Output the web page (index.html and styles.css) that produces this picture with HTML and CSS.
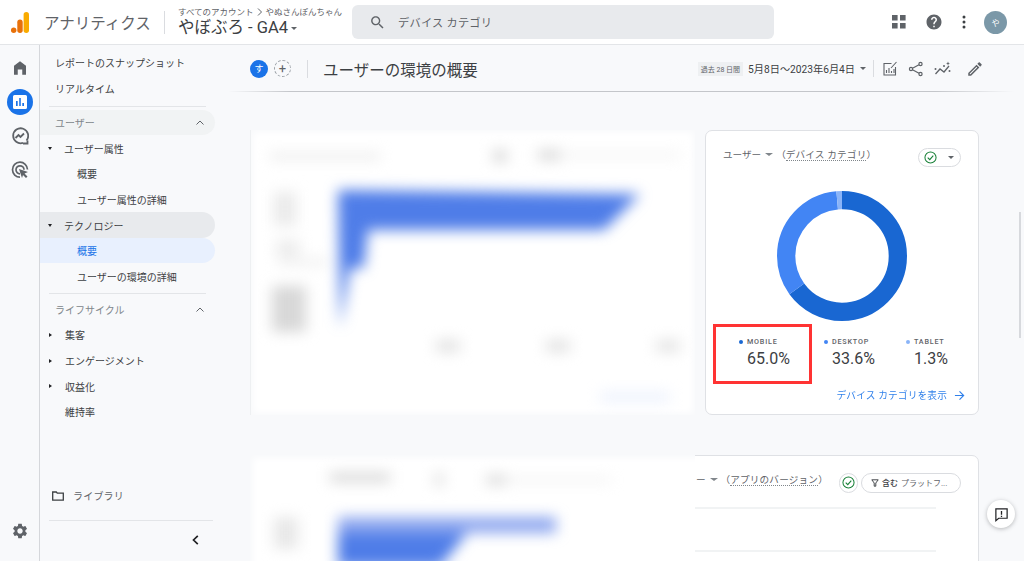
FILE: index.html
```html
<!DOCTYPE html>
<html lang="ja">
<head>
<meta charset="utf-8">
<title>アナリティクス</title>
<link rel="stylesheet" href="styles.css">
</head>
<body>
<div class="app">
  <header class="topbar">
    <svg class="logo" viewBox="0 0 18 21" width="18" height="21"><rect x="12.6" y="0" width="5.4" height="21" rx="2.7" fill="#f9ab00"/><rect x="6.300" y="7.500" width="5.400" height="13.500" rx="2.700" fill="#e8710a"/><circle cx="2.700" cy="18.300" r="2.700" fill="#e8710a"/></svg>
    <span class="product">アナリティクス</span>
    <span class="top-sep"></span>
    <div class="account">
      <div class="crumb">すべてのアカウント <svg class="crumb-arrow" viewBox="0 0 6 8" width="6" height="8"><path d="M1 .5 4.500 4 1 7.500" fill="none" stroke="#5f6368"/></svg> やぬさんぽんちゃん</div>
      <div class="property">やぼぶろ - GA4<i class="caret caret-prop"></i></div>
    </div>
    <div class="search">
      <svg viewBox="0 0 24 24" width="17" height="17"><path fill="#5f6368" d="M15.500 14h-.79l-.28-.27C15.410 12.590 16 11.110 16 9.500 16 5.910 13.090 3 9.500 3S3 5.910 3 9.500 5.910 16 9.500 16c1.610 0 3.090-.59 4.230-1.570l.27.28v.79l5 4.990L20.490 19l-4.990-5zm-6 0C7.010 14 5 11.990 5 9.500S7.010 5 9.500 5 14 7.010 14 9.500 11.990 14 9.500 14z"/></svg>
      <span>デバイス カテゴリ</span>
    </div>
    <div class="top-actions">
      <svg viewBox="0 0 14 14" width="14" height="14"><path fill="#5f6368" d="M0 0h5.600v5.600H0zM8 0h5.600v5.600H8zM0 8h5.600v5.600H0zM8 8h5.600v5.600H8z"/></svg>
      <svg viewBox="0 0 24 24" width="18" height="18"><path fill="#5f6368" d="M12 2C6.480 2 2 6.480 2 12s4.480 10 10 10 10-4.480 10-10S17.520 2 12 2zm1 17h-2v-2h2v2zm2.070-7.750l-.9.920C13.450 12.900 13 13.500 13 15h-2v-.5c0-1.100.45-2.100 1.170-2.830l1.240-1.260c.37-.36.59-.86.59-1.410 0-1.100-.9-2-2-2s-2 .9-2 2H8c0-2.210 1.790-4 4-4s4 1.790 4 4c0 .88-.36 1.680-.93 2.250z"/></svg>
      <svg viewBox="0 0 4 14" width="4" height="14"><g fill="#3c4043"><circle cx="2" cy="2" r="1.500"/><circle cx="2" cy="7" r="1.500"/><circle cx="2" cy="12" r="1.500"/></g></svg>
      <span class="avatar">や</span>
    </div>
  </header>

  <div class="body">
    <nav class="rail">
      <svg class="rail-home" viewBox="0 0 24 24" width="18" height="18"><path fill="#5f6368" d="M12 3 4 9v12h5v-7h6v7h5V9z"/></svg>
      <span class="rail-active"><svg viewBox="0 0 14 14" width="14" height="14"><path fill="#fff" fill-rule="evenodd" d="M1.500 0h11A1.500 1.500 0 0 1 14 1.500v11a1.500 1.500 0 0 1-1.500 1.500h-11A1.500 1.500 0 0 1 0 12.500v-11A1.500 1.500 0 0 1 1.500 0zM3 6v5h1.700V6zm3.200-3v8h1.600V3zm3.100 5v3H11V8z"/></svg></span>
      <svg class="rail-icon" viewBox="0 0 18 18" width="18" height="18"><g fill="none" stroke="#5f6368" stroke-width="1.800"><path d="M15.500 13.500A7.500 7.500 0 1 0 12 15.900"/><path d="M4.500 11 7.500 8l2 2 3.500-3.500"/><path d="M12 16.500h4.500v-3"/></g></svg>
      <svg class="rail-icon" viewBox="0 0 18 18" width="18" height="18"><g fill="none" stroke="#5f6368" stroke-width="1.700"><path d="M9 16.200A7.500 7.500 0 1 1 16.500 8.500"/><path d="M9 12.800A4 4 0 1 1 13 8.800"/></g><path fill="#5f6368" d="M8 8l9 3-3.500 1.500 3 3-1.500 1.500-3-3L11 17z"/></svg>
      <svg class="rail-gear" viewBox="0 0 24 24" width="18" height="18"><path fill="#5f6368" d="M19.140 12.940c.04-.3.06-.61.06-.94 0-.32-.02-.64-.07-.94l2.030-1.580c.18-.14.23-.41.12-.61l-1.920-3.320c-.12-.22-.37-.29-.59-.22l-2.390.96c-.5-.38-1.030-.7-1.620-.94l-.36-2.540c-.04-.24-.24-.41-.48-.41h-3.840c-.24 0-.43.17-.47.41l-.36 2.540c-.59.24-1.130.57-1.620.94l-2.390-.96c-.22-.08-.47 0-.59.22L2.740 8.870c-.12.21-.08.47.12.61l2.030 1.580c-.05.3-.09.63-.09.94s.02.64.07.94l-2.030 1.580c-.18.14-.23.41-.12.61l1.920 3.320c.12.22.37.29.59.22l2.390-.96c.5.38 1.030.7 1.620.94l.36 2.540c.05.24.24.41.48.41h3.840c.24 0 .44-.17.47-.41l.36-2.540c.59-.24 1.130-.56 1.620-.94l2.390.96c.22.08.47 0 .59-.22l1.920-3.320c.12-.22.07-.47-.12-.61l-2.010-1.580zM12 15.600c-1.980 0-3.600-1.620-3.600-3.600s1.620-3.600 3.600-3.600 3.600 1.620 3.600 3.600-1.620 3.600-3.600 3.600z"/></svg>
    </nav>

    <aside class="sidebar">
      <div class="row lv0">レポートのスナップショット</div>
      <div class="row lv0">リアルタイム</div>
      <hr class="nav-sep">
      <div class="row head pill-soft"><span>ユーザー</span><svg class="chev" viewBox="0 0 8 5" width="8" height="5"><path d="M.5 4.500 4 1l3.500 3.500" fill="none" stroke="#5f6368"/></svg></div>
      <div class="row lv1"><i class="caret caret-down"></i>ユーザー属性</div>
      <div class="row lv2">概要</div>
      <div class="row lv2">ユーザー属性の詳細</div>
      <div class="row lv1 pill-grey"><i class="caret caret-down"></i>テクノロジー</div>
      <div class="row lv2 pill-blue">概要</div>
      <div class="row lv2">ユーザーの環境の詳細</div>
      <hr class="nav-sep nav-sep-b">
      <div class="row head"><span>ライフサイクル</span><svg class="chev" viewBox="0 0 8 5" width="8" height="5"><path d="M.5 4.500 4 1l3.500 3.500" fill="none" stroke="#5f6368"/></svg></div>
      <div class="row lv1"><i class="caret caret-right"></i>集客</div>
      <div class="row lv1"><i class="caret caret-right"></i>エンゲージメント</div>
      <div class="row lv1"><i class="caret caret-right"></i>収益化</div>
      <div class="row lv1 no-caret">維持率</div>
      <div class="library">
        <svg viewBox="0 0 12 10" width="12" height="10"><path fill="none" stroke="#3c4043" stroke-width="1.300" d="M.7 1h3.600l1 1.200h6v7H.7z"/></svg>
        <span>ライブラリ</span>
      </div>
      <hr class="nav-sep nav-sep-wide">
      <div class="collapse"><svg viewBox="0 0 7 10" width="7" height="10"><path d="M5.800.8 1.500 5l4.300 4.200" fill="none" stroke="#202124" stroke-width="1.700"/></svg></div>
    </aside>

    <main class="main">
      <div class="titlebar">
        <span class="chip-s">す</span>
        <span class="chip-plus">+</span>
        <span class="title-sep"></span>
        <h1 class="title">ユーザーの環境の概要</h1>
        <div class="tools">
          <span class="period">過去 28 日間</span>
          <span class="dates">5月8日〜2023年6月4日</span>
          <i class="caret caret-date"></i>
          <span class="tools-sep"></span>
          <svg viewBox="0 0 16 16" width="16" height="16"><g fill="none" stroke="#5f6368" stroke-width="1.100"><path d="M9.500 2.500H2v11.500h11.500V6"/><path d="M4.500 12V9M7 12V7M9.500 12v-2M12 12V8"/><path d="m9 7 5.500-6"/></g></svg>
          <svg viewBox="0 0 16 16" width="16" height="16"><g fill="none" stroke="#5f6368" stroke-width="1.200"><circle cx="12.500" cy="3" r="1.600"/><circle cx="3" cy="8" r="1.600"/><circle cx="12.500" cy="13" r="1.600"/><path d="M11 3.800 4.500 7.200M4.500 8.800l6.500 3.400"/></g></svg>
          <svg viewBox="0 0 18 16" width="18" height="16"><path fill="none" stroke="#5f6368" stroke-width="1.300" d="M1.500 13 6 8l4 3 5-6"/><g fill="#5f6368"><circle cx="1.500" cy="8" r="1"/><circle cx="10" cy="5" r="1"/><circle cx="15.500" cy="10" r="1"/><path d="m14 .5.600 1.400L16 2.500l-1.400.6L14 4.500l-.6-1.400-1.400-.6 1.400-.6z"/></g></svg>
          <svg class="tool-edit" viewBox="0 0 24 24" width="18" height="18"><path fill="#5f6368" d="M3 17.250V21h3.750L17.810 9.940l-3.750-3.750L3 17.250zM5.920 19H5v-.92l9.060-9.060.92.92L5.920 19zM20.710 7.040c.39-.39.39-1.020 0-1.410l-2.340-2.340c-.2-.2-.45-.29-.71-.29s-.51.1-.7.29l-1.830 1.830 3.750 3.750 1.830-1.830z"/></svg>
        </div>
      </div>

      <section class="grid">
        <div class="blur-panel">
          <svg viewBox="0 0 445 285" width="445" height="285">
            <g class="blurred">
              <rect x="20" y="24" width="110" height="5" fill="#e4e4e4"/>
              <rect x="243" y="20" width="14" height="12" fill="#d8d8d8"/>
              <rect x="288" y="20" width="22" height="10" fill="#d8d8d8"/>
              <rect x="310" y="23" width="120" height="4" fill="#ececec"/>
              <rect x="24" y="62" width="22" height="34" fill="#eaeaea"/>
              <rect x="26" y="110" width="24" height="16" fill="#ececec"/>
              <rect x="28" y="129" width="50" height="6" fill="#ececec"/>
              <rect x="22" y="156" width="34" height="46" fill="#d8d8d8"/>
              <polygon points="88,60 390,64 354,100 118,100 114,138 100,138 90,198" fill="#4f7de8"/>
              <rect x="186" y="210" width="24" height="12" fill="#e2e2e2"/>
              <rect x="296" y="210" width="24" height="12" fill="#e2e2e2"/>
              <rect x="406" y="210" width="24" height="12" fill="#e4e4e4"/>
              <rect x="350" y="263" width="70" height="8" fill="#e9effd"/>
            </g>
          </svg>
        </div>
        <article class="card">
          <div class="card-head">
            <span class="metric">ユーザー<i class="caret caret-metric"></i></span>
            <span class="paren">（<span class="dotted">デバイス カテゴリ</span>）</span>
            <span class="check-chip">
              <svg viewBox="0 0 14 14" width="13" height="13"><circle cx="7" cy="7" r="6" fill="none" stroke="#188038" stroke-width="1.100"/><path d="M4 7.200 6.200 9.400 10 5" fill="none" stroke="#188038" stroke-width="1.200"/></svg>
              <i class="caret caret-chip"></i>
            </span>
          </div>
          <svg class="donut" viewBox="0 0 130 130" width="130" height="130">
            <g fill="none" stroke-width="18.300" transform="rotate(-90 65 65)">
              <circle cx="65" cy="65" r="55.850" stroke="#1967d2" pathLength="100" stroke-dasharray="65 35"/>
              <circle cx="65" cy="65" r="55.850" stroke="#4285f4" pathLength="100" stroke-dasharray="33.600 66.400" stroke-dashoffset="-65"/>
              <circle cx="65" cy="65" r="55.850" stroke="#8ab4f8" pathLength="100" stroke-dasharray="1.400 98.600" stroke-dashoffset="-98.600"/>
            </g>
          </svg>
          <div class="legend">
            <div class="leg"><div class="leg-name"><i class="dot dot-a"></i>MOBILE</div><div class="leg-val">65.0%</div></div>
            <div class="leg"><div class="leg-name"><i class="dot dot-b"></i>DESKTOP</div><div class="leg-val">33.6%</div></div>
            <div class="leg"><div class="leg-name"><i class="dot dot-c"></i>TABLET</div><div class="leg-val">1.3%</div></div>
          </div>
          <a class="card-link">デバイス カテゴリを表示<svg viewBox="0 0 12 12" width="11" height="11"><path d="M1 6h9.500M6 1.500 10.500 6 6 10.500" fill="none" stroke="#1a73e8" stroke-width="1.300"/></svg></a>
          <span class="redbox"></span>
        </article>

        <div class="blur-panel blur-panel-2">
          <svg viewBox="0 0 445 110" width="445" height="110">
            <g class="blurred">
              <rect x="80" y="18" width="60" height="9" fill="#d6d6d6"/>
              <rect x="184" y="18" width="10" height="13" fill="#e2e2e2"/>
              <rect x="236" y="20" width="20" height="10" fill="#dcdcdc"/>
              <rect x="256" y="23" width="105" height="4" fill="#ececec"/>
              <rect x="24" y="62" width="24" height="32" fill="#e8e8e8"/>
              <rect x="88" y="62" width="218" height="16" fill="#8fa8ef"/>
              <polygon points="88,78 217,78 190,112 88,112" fill="#4f7de8"/>
            </g>
          </svg>
        </div>
        <article class="card card-2">
          <div class="card-head">
            <span class="metric">ー<i class="caret caret-metric"></i></span>
            <span class="paren">（<span class="dotted">アプリのバージョン</span>）</span>
            <span class="check-round"><svg viewBox="0 0 14 14" width="13" height="13"><circle cx="7" cy="7" r="6" fill="none" stroke="#188038" stroke-width="1.100"/><path d="M4 7.200 6.200 9.400 10 5" fill="none" stroke="#188038" stroke-width="1.200"/></svg></span>
            <span class="filter-chip"><svg viewBox="0 0 10 10" width="8" height="8"><path d="M1 1h8L6 5v4H4V5z" fill="none" stroke="#3c4043" stroke-width="1.200"/></svg><b>含む</b> プラットフ...</span>
          </div>
          <div class="rule"></div>
          <div class="rule"></div>
        </article>
      </section>
    </main>
  </div>

  <span class="scroll-thumb"></span>
  <button class="feedback" aria-label="feedback"><svg viewBox="0 0 16 16" width="15" height="15"><path fill="none" stroke="#202124" stroke-width="1.300" d="M2 2h12v10H5l-3 2.500z"/><path stroke="#202124" stroke-width="1.400" d="M8 4.300v4M8 9.200v1.400"/></svg></button>
</div>
</body>
</html>
```
FILE: styles.css
```css
* { box-sizing: border-box; }
html, body { margin: 0; height: 100%; overflow: hidden; }
body { font-family: "Roboto", "Noto Sans CJK JP", sans-serif; color: #3c4043; background: #f8f9fb; }
.app { position: relative; width: 1024px; height: 561px; display: flex; flex-direction: column; overflow: hidden; }

.topbar { height: 45px; flex: none; background: #fff; border-bottom: 1px solid #e3e5e8; display: flex; align-items: center; padding-left: 11px; }
.product { font-size: 15.5px; color: #5f6368; margin-left: 15px; width: 111px; white-space: nowrap; }
.top-sep { width: 1px; height: 23px; background: #dadce0; margin: 0 13px 0 9px; }
.account { width: 174px; flex: none; }
.crumb { font-size: 8.5px; line-height: 11px; color: #5f6368; white-space: nowrap; display: flex; align-items: center; gap: 3px; }
.crumb-arrow { flex: none; }
.property { font-size: 16.5px; line-height: 20px; color: #3c4043; white-space: nowrap; display: flex; align-items: center; }
.search { width: 422px; height: 34px; background: #e8eaed; border-radius: 6px; display: flex; align-items: center; padding-left: 17px; gap: 12px; font-size: 11.2px; color: #5f6368; letter-spacing: .25px; }
.top-actions { display: flex; align-items: center; margin-left: 118px; gap: 19px; }
.avatar { width: 23px; height: 23px; border-radius: 50%; background: #7b98a8; color: #fff; font-size: 8px; display: flex; align-items: center; justify-content: center; margin-left: -1px; }

.caret { display: inline-block; width: 0; height: 0; flex: none; border-style: solid; border-color: #5f6368 transparent transparent; border-width: 3px 3px 0; }
.caret-prop { margin-left: 3px; margin-top: 2px; }
.caret-date { margin-left: 5px; }
.caret-metric { margin-left: 4px; border-width: 3.5px 4px 0; border-top-color: #80868b; }
.caret-chip { margin-left: 11px; }

.body { flex: 1; display: flex; min-height: 0; }
.rail { width: 40px; flex: none; border-right: 1px solid #d5d7db; display: flex; flex-direction: column; align-items: center; padding: 14px 0 0 1px; gap: 16px; }
.rail-active { width: 26px; height: 26px; border-radius: 50%; background: #1a73e8; display: flex; align-items: center; justify-content: center; margin: -4px 0; }
.rail-gear { margin-top: auto; margin-bottom: 21px; }

.sidebar { width: 188px; flex: none; display: flex; flex-direction: column; padding-top: 5.2px; font-size: 10px; color: #3c4043; }
.row { height: 25.6px; flex: none; display: flex; align-items: center; width: 175px; white-space: nowrap; }
.lv0 { padding-left: 15px; }
.lv1 { padding-left: 8px; }
.no-caret { padding-left: 25px; }
.lv2 { padding-left: 37px; }
.head { padding: 0 11px 0 15px; justify-content: space-between; color: #80868b; }
.pill-soft { background: #f1f3f4; border-radius: 0 13px 13px 0; }
.pill-grey { background: #e8eaed; border-radius: 0 13px 13px 0; }
.pill-blue { background: #e8f0fe; border-radius: 0 13px 13px 0; color: #1a73e8; }
.caret-down { border-width: 3px 2.5px 0; border-top-color: #202124; margin-right: 12px; }
.caret-right { border-width: 2.5px 0 2.5px 3px; border-color: transparent transparent transparent #202124; margin: 0 13px 0 1px; }
.nav-sep { border: 0; height: 1px; background: #e3e5e8; margin: 5px 0 2.5px 9px; width: 157px; flex: none; }
.nav-sep-b { margin-top: 4px; }
.nav-sep-wide { width: 164px; margin-top: 16px; margin-bottom: 0; }
.library { display: flex; align-items: center; margin-top: 63px; padding-left: 12px; gap: 9px; height: 16px; color: #5f6368; flex: none; }
.library span { letter-spacing: .2px; }
.collapse { display: flex; justify-content: flex-end; padding: 14px 29px 0 0; }

.main { flex: 1; min-width: 0; overflow: hidden; }
.titlebar { height: 47px; display: flex; align-items: center; padding: 0 40px 0 22px; position: relative; }
.titlebar::after { content: ""; position: absolute; left: 0; right: 10px; bottom: 0; height: 1px; background: linear-gradient(90deg, rgba(0,0,0,0), #c4c6ca 8%, #c4c6ca 90%, rgba(0,0,0,0)); }
.chip-s { width: 18px; height: 18px; border-radius: 50%; background: #1a73e8; color: #fff; font-size: 9px; display: flex; align-items: center; justify-content: center; }
.chip-plus { width: 17px; height: 17px; border-radius: 50%; border: 1px dashed #9aa0a6; margin-left: 6px; display: flex; align-items: center; justify-content: center; font-size: 13px; line-height: 1; color: #5f6368; }
.title-sep { width: 1px; height: 18px; background: #dadce0; margin: 0 15px 0 16px; }
.title { font-size: 15.5px; font-weight: 400; color: #3c4043; margin: 0; white-space: nowrap; }
.tools { margin-left: auto; display: flex; align-items: center; }
.period { background: #eef0f2; font-size: 7px; color: #5f6368; padding: 2px 3px; white-space: nowrap; margin-right: 5px; }
.dates { font-size: 10.2px; color: #3c4043; white-space: nowrap; }
.tools-sep { width: 1px; height: 17px; background: #dadce0; margin: 0 8px 0 7px; }
.tools svg { margin-right: 10px; }
.tools .tool-edit { margin: 0 0 0 4px; }

.grid { display: grid; grid-template-columns: 445px 274px; column-gap: 10px; row-gap: 40px; padding: 38px 0 0 22px; }
.blur-panel { height: 285px; background: #fff; position: relative; z-index: 1; box-shadow: inset 0 0 7px 2px #f8f9fb; border-left: 1px solid #eef0f2; }
.blur-panel svg { display: block; margin-left: -1px; }
.blurred { filter: blur(7px); }
.blur-panel-2 { height: 110px; box-shadow: inset 6px 6px 7px -3px #f8f9fb; border-left: 0; }
.blur-panel-2 svg { margin-left: 0; }

.card { background: #fff; border: 1px solid #dfe1e5; border-radius: 7px; height: 285px; padding: 0 17px; position: relative; display: flex; flex-direction: column; }
.card-head { display: flex; align-items: center; height: 19px; margin-top: 17px; font-size: 9.6px; color: #5f6368; white-space: nowrap; flex: none; }
.metric { display: inline-flex; align-items: center; margin-bottom: 7px; }
.paren { margin: 0 0 7px 3px; }
.dotted { border-bottom: 1px dotted #80868b; letter-spacing: .2px; }
.check-chip { margin-left: auto; width: 43px; height: 19px; border: 1px solid #dadce0; border-radius: 10px; display: flex; align-items: center; padding-left: 5px; }
.donut { display: block; margin: 24px 0 0 54px; flex: none; }
.legend { display: grid; grid-template-columns: 85px 82px 82px; margin: 16px 0 0 16px; }
.leg { display: flex; flex-direction: column; align-items: flex-start; }
.leg-name { font-size: 7.2px; letter-spacing: .8px; color: #5f6368; font-weight: 500; line-height: 10px; display: flex; align-items: center; gap: 4px; }
.leg-val { font-size: 16px; color: #3c4043; line-height: 24px; padding-left: 8px; }
.dot { width: 4px; height: 4px; border-radius: 50%; }
.dot-a { background: #1967d2; } .dot-b { background: #4285f4; } .dot-c { background: #8ab4f8; }
.card-link { margin-top: 17px; align-self: flex-end; margin-right: -4px; color: #1a73e8; font-size: 9.7px; display: flex; align-items: center; gap: 7px; letter-spacing: .15px; white-space: nowrap; opacity: .9; }
.redbox { position: absolute; left: 7px; top: 193px; width: 99px; height: 60px; border: 3.5px solid #ff3333; }

.card-2 { margin-left: -55px; width: 329px; height: 200px; padding: 0 17px 0 45px; }
.check-round { width: 19px; height: 20px; border: 1px solid #dadce0; border-radius: 10px; display: flex; align-items: center; justify-content: center; margin-left: auto; }
.filter-chip { display: flex; align-items: center; gap: 3px; height: 20px; width: 100px; border: 1px solid #dadce0; border-radius: 10px; margin-left: 3px; padding-left: 9px; font-size: 8px; color: #5f6368; }
.filter-chip b { font-weight: 500; color: #3c4043; }
.rule { height: 2px; background: #f1f3f4; width: 250px; margin-left: -10px; flex: none; margin-top: 14.5px; }
.rule + .rule { margin-top: 41px; }

.scroll-thumb { position: absolute; left: 1019px; top: 212px; width: 2px; height: 126px; background: #d7d9dd; }
.feedback { position: absolute; left: 987px; top: 500px; width: 28px; height: 28px; border-radius: 50%; border: 0; padding: 0; background: #fff; box-shadow: 0 1px 4px rgba(60,64,67,.35); display: flex; align-items: center; justify-content: center; }
```
